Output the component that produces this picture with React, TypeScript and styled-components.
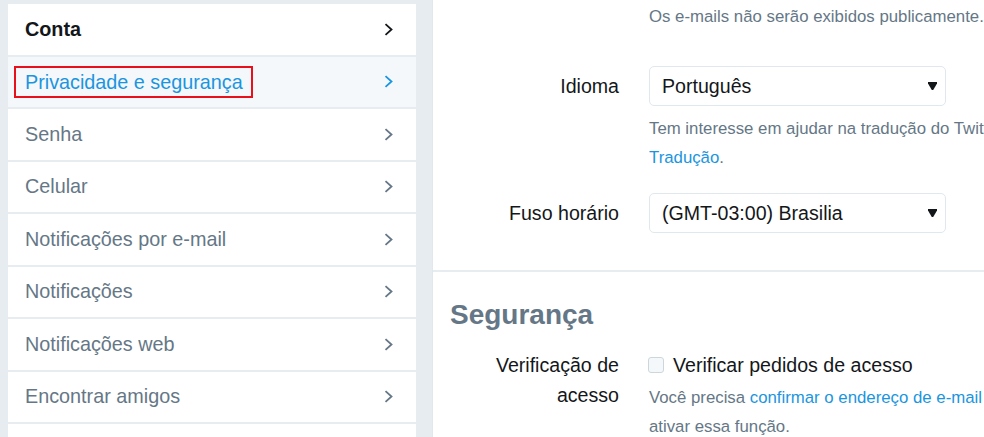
import React from "react";
import styled, { createGlobalStyle } from "styled-components";

const Global = createGlobalStyle`
  html, body { margin: 0; padding: 0; }
  body {
    background: #e6ecf0;
    font-family: "Liberation Sans", Arial, sans-serif;
    overflow: hidden;
    width: 984px;
    height: 437px;
  }
`;

const Page = styled.div`
  display: flex;
  align-items: flex-start;
  width: 984px;
  height: 437px;
  overflow: hidden;
`;

const Nav = styled.ul`
  list-style: none;
  margin: 4px 0 0 8px;
  padding: 0;
  width: 408px;
  flex: none;
  background: #fff;
`;

type Tone = "dark" | "active" | "muted";
const toneColor: Record<Tone, string> = {
  dark: "#14171a",
  active: "#1b95e0",
  muted: "#657786",
};

const NavItem = styled.li<{ $tone: Tone }>`
  display: flex;
  align-items: center;
  justify-content: space-between;
  height: 50.5px;
  padding: 0 23px 0 17px;
  border-bottom: 2px solid #e6ecf0;
  background: ${(p) => (p.$tone === "active" ? "#f5f8fa" : "#fff")};
  color: ${(p) => toneColor[p.$tone]};
  font-size: 19.8px;
  font-weight: ${(p) => (p.$tone === "dark" ? 700 : 400)};
  white-space: nowrap;
`;

const Highlight = styled.span`
  display: inline-block;
  margin-left: -11px;
  padding: 0 8px 0 9px;
  border: 2px solid #e8101a;
  line-height: 28px;
`;

const Chevron = ({ color }: { color: string }) => (
  <svg width="9" height="13" viewBox="0 0 9 13" fill="none">
    <polyline points="1.5,1.2 7.5,6.5 1.5,11.8" stroke={color} strokeWidth="1.8" />
  </svg>
);

const Panel = styled.div`
  margin-left: 16px;
  flex: none;
  width: 560px;
  height: 437px;
  background: #fff;
  border-left: 1px solid #e1e8ed;
`;

const Row = styled.div<{ $top: number }>`
  display: grid;
  grid-template-columns: 186px 450px;
  column-gap: 30px;
  margin-top: ${(p) => p.$top}px;
`;

const Label = styled.div<{ $lh: number }>`
  text-align: right;
  color: #14171a;
  font-size: 19.6px;
  line-height: ${(p) => p.$lh}px;
`;

const Control = styled.div`
  min-width: 0;
`;

const Help = styled.div<{ $top?: number }>`
  margin-top: ${(p) => p.$top ?? 0}px;
  color: #657786;
  font-size: 16.8px;
  line-height: 29px;
  white-space: nowrap;
`;

const Link = styled.span`
  color: #1b95e0;
`;

const Select = styled.div`
  box-sizing: border-box;
  width: 297px;
  height: 40px;
  display: flex;
  align-items: center;
  justify-content: space-between;
  padding: 0 8px 0 12px;
  border: 1px solid #e1e8ed;
  border-radius: 5px;
  color: #14171a;
  font-size: 19.6px;
  background: #fff;
`;

const Arrow = () => (
  <svg width="9" height="8" viewBox="0 0 9 8">
    <polygon points="0,0 9,0 9,1.5 5.2,8 3.8,8 0,1.5" fill="#14171a" />
  </svg>
);

const Divider = styled.hr`
  border: 0;
  height: 2px;
  margin: 37px 0 0 0;
  background: #e6ecf0;
`;

const Heading = styled.h2`
  margin: 26px 0 0 17px;
  font-size: 28px;
  line-height: 34px;
  font-weight: 700;
  color: #657786;
`;

const CheckLine = styled.label`
  display: flex;
  align-items: center;
  gap: 9px;
  height: 30px;
  color: #14171a;
  font-size: 19.6px;
  white-space: nowrap;
`;

const Box = styled.span`
  box-sizing: border-box;
  width: 16px;
  height: 16px;
  margin-left: -1px;
  border: 1px solid #ccd6dd;
  border-radius: 3px;
  background: #f5f8fa;
`;

const items: { label: string; tone: Tone }[] = [
  { label: "Conta", tone: "dark" },
  { label: "Privacidade e segurança", tone: "active" },
  { label: "Senha", tone: "muted" },
  { label: "Celular", tone: "muted" },
  { label: "Notificações por e-mail", tone: "muted" },
  { label: "Notificações", tone: "muted" },
  { label: "Notificações web", tone: "muted" },
  { label: "Encontrar amigos", tone: "muted" },
  { label: "", tone: "muted" },
];

export default function App() {
  return (
    <>
      <Global />
      <Page>
        <Nav>
          {items.map((it, i) => (
            <NavItem key={i} $tone={it.tone}>
              {it.tone === "active" ? <Highlight>{it.label}</Highlight> : <span>{it.label}</span>}
              {it.label && <Chevron color={toneColor[it.tone]} />}
            </NavItem>
          ))}
        </Nav>
        <Panel>
          <Row $top={2}>
            <div />
            <Control>
              <Help>Os e-mails não serão exibidos publicamente.</Help>
            </Control>
          </Row>
          <Row $top={35}>
            <Label $lh={40}>Idioma</Label>
            <Control>
              <Select>
                <span>Português</span>
                <Arrow />
              </Select>
              <Help $top={8}>Tem interesse em ajudar na tradução do Twitter? Visite o Centro de</Help>
              <Help>
                <Link>Tradução</Link>.
              </Help>
            </Control>
          </Row>
          <Row $top={21}>
            <Label $lh={40}>Fuso horário</Label>
            <Control>
              <Select>
                <span>(GMT-03:00) Brasilia</span>
                <Arrow />
              </Select>
            </Control>
          </Row>
          <Divider />
          <Heading>Segurança</Heading>
          <Row $top={18}>
            <Label $lh={30}>
              Verificação de
              <br />
              acesso
            </Label>
            <Control>
              <CheckLine>
                <Box />
                Verificar pedidos de acesso
              </CheckLine>
              <Help $top={3}>
                Você precisa <Link>confirmar o endereço de e-mail</Link> para
              </Help>
              <Help>ativar essa função.</Help>
            </Control>
          </Row>
        </Panel>
      </Page>
    </>
  );
}
